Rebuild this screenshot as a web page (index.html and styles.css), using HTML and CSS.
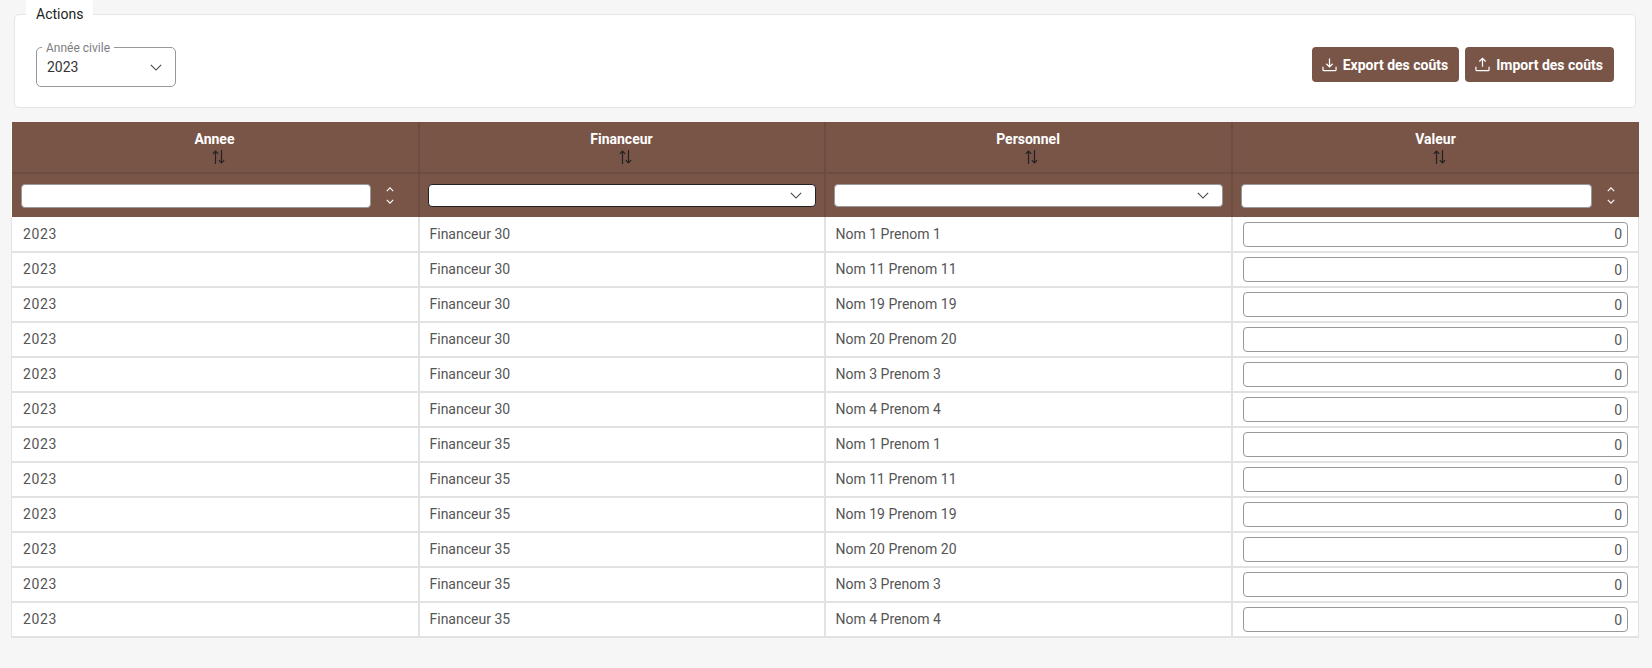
FILE: index.html
```html
<!DOCTYPE html>
<html lang="fr">
<head>
  <meta charset="UTF-8">
  <title>Coûts</title>
  <link rel="stylesheet" href="styles.css">
</head>
<body>
  <div class="page">
    <section class="actions">
      <span class="actions-title">Actions</span>
      <div class="field">
        <span class="field-label">Année civile</span>
        <span class="field-value">2023</span>
        <svg class="chevron" viewBox="0 0 14 8"><path d="M1 1l6 6 6-6"/></svg>
      </div>
      <div class="buttons">
        <button class="btn"><svg viewBox="0 0 16 16"><path d="M8 1.5v9M4.6 7.2L8 10.6l3.4-3.4M1 10.5v3a1 1 0 0 0 1 1h12a1 1 0 0 0 1-1v-3"/></svg>Export des coûts</button>
        <button class="btn"><svg viewBox="0 0 16 16"><path d="M8 10.5v-9M4.6 4.8L8 1.4l3.4 3.4M1 10.5v3a1 1 0 0 0 1 1h12a1 1 0 0 0 1-1v-3"/></svg>Import des coûts</button>
      </div>
    </section>

    <table class="grid">
      <colgroup>
        <col class="col-annee">
        <col class="col-financeur">
        <col class="col-personnel">
        <col class="col-valeur">
      </colgroup>
      <thead>
        <tr class="head-row">
          <th>Annee<svg class="sort" viewBox="0 0 13 14"><path d="M3.5 14V1M.8 3.8L3.5 1l2.7 2.8M9.5 0v13M6.8 10.2L9.5 13l2.7-2.8"/></svg></th>
          <th>Financeur<svg class="sort" viewBox="0 0 13 14"><path d="M3.5 14V1M.8 3.8L3.5 1l2.7 2.8M9.5 0v13M6.8 10.2L9.5 13l2.7-2.8"/></svg></th>
          <th>Personnel<svg class="sort" viewBox="0 0 13 14"><path d="M3.5 14V1M.8 3.8L3.5 1l2.7 2.8M9.5 0v13M6.8 10.2L9.5 13l2.7-2.8"/></svg></th>
          <th>Valeur<svg class="sort" viewBox="0 0 13 14"><path d="M3.5 14V1M.8 3.8L3.5 1l2.7 2.8M9.5 0v13M6.8 10.2L9.5 13l2.7-2.8"/></svg></th>
        </tr>
        <tr class="filter-row">
          <th>
            <div class="filter-num">
              <input class="filter-input" type="text">
              <span class="spin">
                <svg viewBox="0 0 10 6"><path d="M1 5l4-4 4 4"/></svg>
                <svg viewBox="0 0 10 6"><path d="M1 1l4 4 4-4"/></svg>
              </span>
            </div>
          </th>
          <th><div class="filter-select focused"><svg class="chevron" viewBox="0 0 14 8"><path d="M1 1l6 6 6-6"/></svg></div></th>
          <th><div class="filter-select"><svg class="chevron" viewBox="0 0 14 8"><path d="M1 1l6 6 6-6"/></svg></div></th>
          <th>
            <div class="filter-num">
              <input class="filter-input" type="text">
              <span class="spin">
                <svg viewBox="0 0 10 6"><path d="M1 5l4-4 4 4"/></svg>
                <svg viewBox="0 0 10 6"><path d="M1 1l4 4 4-4"/></svg>
              </span>
            </div>
          </th>
        </tr>
      </thead>
      <tbody>
        <tr><td>2023</td><td>Financeur 30</td><td>Nom 1 Prenom 1</td><td class="val"><input value="0"></td></tr>
        <tr><td>2023</td><td>Financeur 30</td><td>Nom 11 Prenom 11</td><td class="val"><input value="0"></td></tr>
        <tr><td>2023</td><td>Financeur 30</td><td>Nom 19 Prenom 19</td><td class="val"><input value="0"></td></tr>
        <tr><td>2023</td><td>Financeur 30</td><td>Nom 20 Prenom 20</td><td class="val"><input value="0"></td></tr>
        <tr><td>2023</td><td>Financeur 30</td><td>Nom 3 Prenom 3</td><td class="val"><input value="0"></td></tr>
        <tr><td>2023</td><td>Financeur 30</td><td>Nom 4 Prenom 4</td><td class="val"><input value="0"></td></tr>
        <tr><td>2023</td><td>Financeur 35</td><td>Nom 1 Prenom 1</td><td class="val"><input value="0"></td></tr>
        <tr><td>2023</td><td>Financeur 35</td><td>Nom 11 Prenom 11</td><td class="val"><input value="0"></td></tr>
        <tr><td>2023</td><td>Financeur 35</td><td>Nom 19 Prenom 19</td><td class="val"><input value="0"></td></tr>
        <tr><td>2023</td><td>Financeur 35</td><td>Nom 20 Prenom 20</td><td class="val"><input value="0"></td></tr>
        <tr><td>2023</td><td>Financeur 35</td><td>Nom 3 Prenom 3</td><td class="val"><input value="0"></td></tr>
        <tr><td>2023</td><td>Financeur 35</td><td>Nom 4 Prenom 4</td><td class="val"><input value="0"></td></tr>
      </tbody>
    </table>
  </div>
</body>
</html>
```

FILE: styles.css
```css
body {
  margin: 0;
  background: #f6f6f6;
  font-family: Roboto, sans-serif;
  font-size: 14px;
  color: #555;
  overflow: hidden;
}
.page {
  padding: 14px 14px 0 11px;
}
.actions {
  position: relative;
  box-sizing: border-box;
  height: 94px;
  margin: 0 2px 14px 3px;
  padding: 32px 21px 0 21px;
  background: #fff;
  border: 1px solid #e6e6e6;
  border-radius: 5px;
  display: flex;
  justify-content: space-between;
  align-items: flex-start;
}
.actions-title {
  position: absolute;
  top: -15px;
  left: 11px;
  padding: 0 10px;
  height: 28px;
  line-height: 28px;
  background: #fff;
  color: #222;
  font-size: 14px;
}
.field {
  position: relative;
  box-sizing: border-box;
  width: 140px;
  height: 40px;
  border: 1px solid #999;
  border-radius: 5px;
  display: flex;
  align-items: center;
  justify-content: space-between;
  padding: 0 13px 0 10px;
}
.field-label {
  position: absolute;
  top: -7px;
  left: 5px;
  padding: 0 4px;
  background: #fff;
  color: #7d7d7d;
  font-size: 12px;
  line-height: 14px;
}
.field-value {
  font-size: 14px;
  color: #333;
}
.chevron {
  width: 12px;
  height: 7px;
  fill: none;
  stroke: #444;
  stroke-width: 1.3;
}
.buttons {
  display: flex;
  gap: 6px;
}
.btn {
  display: flex;
  align-items: center;
  gap: 6px;
  box-sizing: border-box;
  height: 35px;
  padding: 0 11px 0 10px;
  background: #795548;
  color: #fff;
  border: none;
  border-radius: 4px;
  font-family: Roboto, sans-serif;
  font-size: 14px;
  font-weight: 700;
}
.btn svg {
  width: 15px;
  height: 15px;
  fill: none;
  stroke: #fff;
  stroke-width: 1.3;
}
.grid {
  width: 1627px;
  table-layout: fixed;
  border-collapse: collapse;
  background: #fff;
}
.col-annee {
  width: 407px;
}
.col-financeur {
  width: 406px;
}
.col-personnel {
  width: 407px;
}
.col-valeur {
  width: 407px;
}
.head-row th {
  height: 51px;
  padding: 8px 0 0;
  box-sizing: border-box;
  background: #795548;
  color: #fff;
  font-size: 14px;
  font-weight: 700;
  line-height: 18px;
  text-align: center;
  border: 2px solid #6d4c41;
  border-width: 0 2px 2px 0;
  vertical-align: top;
}
.head-row th:last-child,
.filter-row th:last-child {
  border-right: none;
}
.sort {
  display: block;
  width: 13px;
  height: 14px;
  margin: 2px 0 0 calc(50% - 3px);
  fill: none;
  stroke: #222;
  stroke-width: 1.2;
}
.filter-row th {
  height: 44px;
  padding: 0 8px;
  box-sizing: border-box;
  background: #795548;
  border-right: 2px solid #6d4c41;
}
.filter-row th:first-child {
  padding-left: 9px;
}
.filter-num {
  display: flex;
  align-items: center;
}
.filter-input {
  flex: 1;
  min-width: 0;
  box-sizing: border-box;
  height: 24px;
  padding: 0;
  border: 1px solid #999;
  border-radius: 4px;
  background: #fff;
}
.spin {
  width: 39px;
  flex: none;
  display: flex;
  flex-direction: column;
  align-items: center;
  gap: 7px;
}
.spin svg {
  width: 8px;
  height: 5px;
  fill: none;
  stroke: #fff;
  stroke-width: 1.4;
}
.filter-select {
  box-sizing: border-box;
  height: 23px;
  background: #fff;
  border: 1px solid #999;
  border-radius: 4px;
  display: flex;
  align-items: center;
  justify-content: flex-end;
  padding-right: 13px;
}
.filter-select.focused {
  border-color: #222;
}
.grid td {
  height: 35px;
  box-sizing: border-box;
  padding: 0 10px 1px;
  border: 2px solid #e2e2e2;
  border-top: none;
  border-left-width: 1px;
  color: #555;
  font-size: 14px;
}
.grid td:first-child {
  padding-left: 11px;
  letter-spacing: 0.6px;
}
.grid td.val {
  padding: 0 10px;
  border-right-width: 1px;
}
.val input {
  display: block;
  box-sizing: border-box;
  width: 100%;
  height: 25px;
  padding: 0 5px;
  border: 1px solid #999;
  border-radius: 4px;
  text-align: right;
  font-family: Roboto, sans-serif;
  font-size: 14px;
  color: #555;
}
```
